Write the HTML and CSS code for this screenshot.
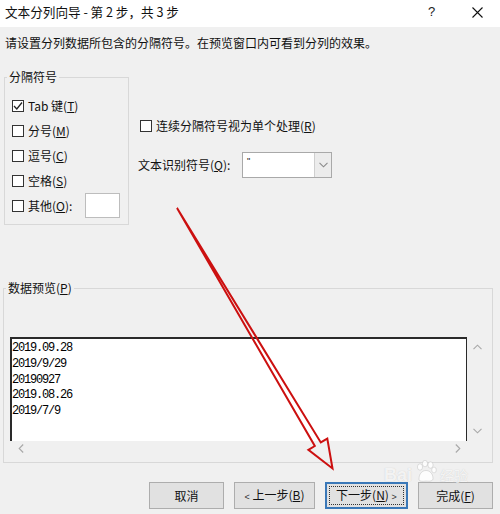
FILE: index.html
```html
<!DOCTYPE html>
<html lang="zh-CN">
<head>
<meta charset="utf-8">
<title>文本分列向导</title>
<link rel="stylesheet" href="styles.css">
</head>
<body>
<div class="window">
  <div class="titlebar">
    <span class="title">文本分列向导 - 第 2 步，共 3 步</span>
    <span class="cap help">?</span>
    <span class="cap close"><svg width="11" height="11" viewBox="0 0 11 11"><path d="M0.5 0.5 L10.5 10.5 M10.5 0.5 L0.5 10.5" stroke="#111" stroke-width="1.1" fill="none"/></svg></span>
  </div>

  <p class="instruction">请设置分列数据所包含的分隔符号。在预览窗口内可看到分列的效果。</p>

  <div class="options">
    <fieldset class="group delims">
      <legend class="legend">分隔符号</legend>
      <div class="row"><span class="cb"><svg width="12" height="12" viewBox="0 0 12 12"><polyline points="2,6 4.8,9 10,2.5" fill="none" stroke="#222" stroke-width="1.3"/></svg></span><span>Tab 键(<u>T</u>)</span></div>
      <div class="row"><span class="cb"></span><span>分号(<u>M</u>)</span></div>
      <div class="row"><span class="cb"></span><span>逗号(<u>C</u>)</span></div>
      <div class="row"><span class="cb"></span><span>空格(<u>S</u>)</span></div>
      <div class="row"><span class="cb"></span><span>其他(<u>O</u>):</span><span class="other-input"></span></div>
    </fieldset>

    <div class="right-col">
      <div class="row consec"><span class="cb"></span><span>连续分隔符号视为单个处理(<u>R</u>)</span></div>
      <div class="qualifier">
        <span class="qlabel">文本识别符号(<u>Q</u>):</span>
        <div class="combo">
          <span class="combo-text">"</span>
          <span class="combo-btn"><svg width="9" height="6" viewBox="0 0 9 6"><polyline points="0.5,0.8 4.5,4.8 8.5,0.8" fill="none" stroke="#8a8a8a" stroke-width="1.1"/></svg></span>
        </div>
      </div>
    </div>
  </div>

  <fieldset class="group preview">
    <legend class="legend">数据预览(<u>P</u>)</legend>
    <div class="pv-grid">
      <div class="pv-box">
        <div>2019.09.28</div>
        <div>2019/9/29</div>
        <div>20190927</div>
        <div>2019.08.26</div>
        <div>2019/7/9</div>
      </div>
      <div class="vscroll">
        <svg width="9" height="6" viewBox="0 0 9 6"><polyline points="0.5,5.2 4.5,1.2 8.5,5.2" fill="none" stroke="#a8a8a8" stroke-width="1.1"/></svg>
        <svg width="9" height="6" viewBox="0 0 9 6"><polyline points="0.5,0.8 4.5,4.8 8.5,0.8" fill="none" stroke="#a8a8a8" stroke-width="1.1"/></svg>
      </div>
      <div class="hscroll">
        <svg width="6" height="9" viewBox="0 0 6 9"><polyline points="5.2,0.5 1.2,4.5 5.2,8.5" fill="none" stroke="#a8a8a8" stroke-width="1.1"/></svg>
        <svg width="6" height="9" viewBox="0 0 6 9"><polyline points="0.8,0.5 4.8,4.5 0.8,8.5" fill="none" stroke="#a8a8a8" stroke-width="1.1"/></svg>
      </div>
      <div class="corner"></div>
    </div>
  </fieldset>

  <div class="buttons">
    <button class="btn w-cancel"><span>取消</span></button>
    <button class="btn w-prev"><span><span class="lt">&lt;</span>&nbsp;上一步(<u>B</u>)</span></button>
    <button class="btn w-next focused"><span class="focus-ring"><span>下一步(<u>N</u>)&nbsp;<span class="lt">&gt;</span></span></span></button>
    <button class="btn w-finish"><span>完成(<u>F</u>)</span></button>
  </div>

  <div class="watermark">
    <span class="wm-bai">Bai</span>
    <svg class="wm-paw" width="22" height="22" viewBox="0 0 22 22">
      <g fill="rgba(255,255,255,0.85)" stroke="rgba(150,150,150,0.35)" stroke-width="0.8">
        <ellipse cx="5" cy="7" rx="2.6" ry="3.2"/>
        <ellipse cx="10" cy="3.6" rx="2.6" ry="3.2"/>
        <ellipse cx="15.5" cy="5" rx="2.6" ry="3.2"/>
        <ellipse cx="19" cy="10" rx="2.3" ry="2.9"/>
        <path d="M4 19 C4 13 8 10.5 11 10.5 C14.5 10.5 18 13.5 18 18.5 C18 21 15 21.5 11 21 C7 21.5 4 21.5 4 19 Z"/>
      </g>
    </svg>
    <span class="wm-jy">经验</span>
  </div>

  <svg class="arrow" width="500" height="514" viewBox="0 0 500 514">
    <polygon points="177,208 320.8,442.4 327.3,438.6 332.5,468.5 308.4,449.8 314.8,446 177,208" fill="none" stroke="#cc1010" stroke-width="2" stroke-linejoin="miter"/>
  </svg>
</div>
</body>
</html>
```

FILE: styles.css
```css
* { box-sizing: border-box; }

html, body {
  margin: 0;
  padding: 0;
}

body {
  width: 500px;
  height: 514px;
  overflow: hidden;
  background: #f0f0f0;
  font-family: "Noto Sans CJK SC", "Noto Sans", sans-serif;
  font-size: 12px;
  color: #111;
}

.window {
  position: relative;
  width: 500px;
  height: 514px;
}

u { text-decoration: underline; text-underline-offset: 1px; }

.titlebar {
  height: 27px;
  background: #fff;
  display: flex;
  align-items: center;
  padding: 0 0 3px 5px;
  font-size: 12.6px;
  line-height: 16px;
}

.title { flex: 1; }

.cap {
  width: 45px;
  display: flex;
  justify-content: center;
  align-items: center;
  height: 16px;
}

.help {
  font-family: "Liberation Sans", sans-serif;
  font-size: 13px;
  color: #222;
}

.close { width: 46px; }

.instruction {
  margin: 8px 0 0 5px;
  line-height: 16px;
}

.options {
  display: flex;
  align-items: flex-start;
  margin-top: 18px;
}

.group {
  border: 1px solid #d8d8d8;
  margin: 0;
  min-width: 0;
}

.legend {
  padding: 0 2px;
  line-height: 16px;
}

.delims {
  margin-left: 4px;
  width: 125px;
  padding: 8px 4px 6px 7px;
}

.delims .legend { margin-left: -5px; }

.row {
  display: flex;
  align-items: center;
  height: 25px;
  gap: 4px;
  line-height: 16px;
}

.cb {
  width: 12px;
  height: 12px;
  border: 1px solid #333;
  background: #fff;
  flex: none;
  display: flex;
}

.cb svg { margin: -1px; }

.other-input {
  width: 35px;
  height: 25px;
  border: 1px solid #bdbdbd;
  background: #fff;
  margin-left: 9px;
}

.right-col {
  margin-left: 9px;
  margin-top: 47px;
  display: flex;
  flex-direction: column;
}

.consec {
  height: 20px;
  padding-left: 2px;
}

.qualifier {
  display: flex;
  align-items: center;
  margin-top: 16px;
  height: 26px;
}

.qlabel {
  width: 104px;
  line-height: 16px;
}

.combo {
  width: 90px;
  height: 26px;
  border: 1px solid #a9a9a9;
  background: #fff;
  display: flex;
}

.combo-text {
  flex: 1;
  padding: 2px 0 0 4px;
  font-family: "Liberation Sans", sans-serif;
  font-size: 9px;
  line-height: 12px;
}

.combo-btn {
  width: 17px;
  border-left: 1px solid #cfcfcf;
  background: #ececec;
  display: flex;
  align-items: center;
  justify-content: center;
}

.preview {
  margin: 55px 0 0 3px;
  width: 490px;
  padding: 41px 6px 6px 8px;
}

.preview .legend { margin-left: -6px; }

.pv-grid {
  display: grid;
  grid-template-columns: 1fr 19px;
  grid-template-rows: 104px 15px;
}

.pv-box {
  background: #fff;
  border-top: 2px solid #2a2a2a;
  border-left: 2px solid #2a2a2a;
  border-right: 1px solid #2a2a2a;
  font-family: "Liberation Mono", "DejaVu Sans Mono", monospace;
  font-size: 12px;
  letter-spacing: -1.2px;
  line-height: 15.75px;
  color: #000;
  padding-top: 2px;
  margin-left: -2px;
}

.vscroll {
  display: flex;
  flex-direction: column;
  justify-content: space-between;
  align-items: center;
  padding: 7px 0 7px 2px;
}

.hscroll {
  display: flex;
  justify-content: space-between;
  align-items: center;
  padding: 0 6px 0 6px;
}

.buttons {
  display: flex;
  justify-content: flex-end;
  gap: 10px;
  margin-top: 19px;
  padding-right: 7px;
}

.btn {
  height: 27px;
  border: 1px solid #adadad;
  background: #e1e1e1;
  font-family: "Noto Sans CJK SC", "Noto Sans", sans-serif;
  font-size: 12px;
  color: #111;
  padding: 0;
  line-height: 16px;
  display: flex;
  align-items: center;
  justify-content: center;
}

.w-cancel { width: 75px; }
.w-prev { width: 81px; }
.w-next { width: 83px; }
.w-finish { width: 75px; }

.lt {
  font-family: "Liberation Sans", sans-serif;
  font-size: 9px;
  color: #333;
}

.focused {
  border: 2px solid #3a78b8;
  padding: 2px;
}

.focus-ring {
  border: 1px dotted #333;
  width: 100%;
  height: 100%;
  display: flex;
  align-items: center;
  justify-content: center;
}

.watermark {
  position: absolute;
  left: 384px;
  top: 460px;
  display: flex;
  align-items: flex-end;
  gap: 3px;
  pointer-events: none;
}

.wm-bai {
  font-family: "Liberation Sans", sans-serif;
  font-size: 18px;
  font-weight: bold;
  line-height: 13px;
  height: 13px;
  color: rgba(255, 255, 255, 0.8);
  text-shadow: 0 0 1px rgba(120, 120, 120, 0.35);
}

.wm-jy {
  font-size: 14px;
  line-height: 14px;
  height: 14px;
  color: rgba(255, 255, 255, 0.8);
  text-shadow: 0 0 1px rgba(120, 120, 120, 0.35);
}

.arrow {
  position: absolute;
  left: 0;
  top: 0;
  pointer-events: none;
}
```
